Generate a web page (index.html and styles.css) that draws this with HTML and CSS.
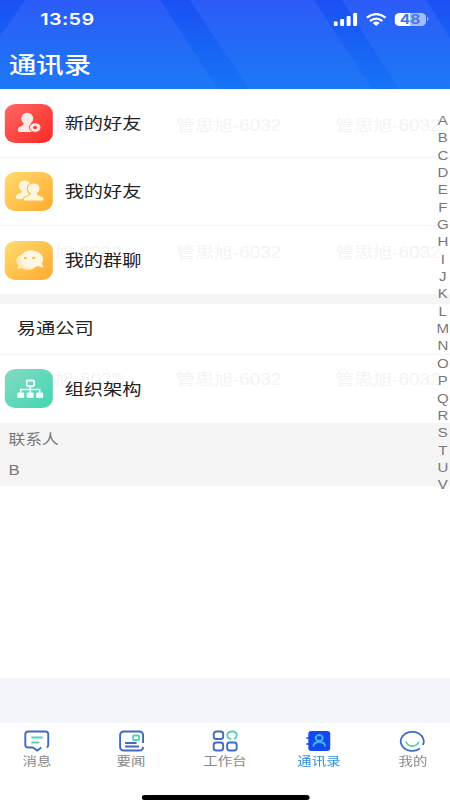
FILE: index.html
```html
<!DOCTYPE html>
<html lang="zh-CN">
<head>
<meta charset="utf-8">
<title>通讯录</title>
<link rel="stylesheet" href="styles.css">
</head>
<body>
<div class="app">
  <header class="header">
    <svg class="stripes" viewBox="0 0 450 89" preserveAspectRatio="none">
      <defs><linearGradient id="band" x1="0" y1="0" x2="0" y2="89" gradientUnits="userSpaceOnUse"><stop offset="0" stop-color="#1b50f4"/><stop offset="1" stop-color="#1674f5"/></linearGradient></defs>
      <path fill="url(#band)" d="M0 0H25L0 37ZM160 0H190L249 89H218ZM314 0H342L399 89H372ZM426 0H450V38Z"/>
    </svg>
    <div class="status">
      <span class="time">13:59</span>
      <div class="signals">
        <svg class="cell" viewBox="0 0 24 13" preserveAspectRatio="none" fill="#fff"><rect x="0" y="8.5" width="4" height="4.5" rx="1"/><rect x="6.5" y="6" width="4" height="7" rx="1"/><rect x="13" y="3" width="4" height="10" rx="1"/><rect x="19.5" y="0" width="4" height="13" rx="1"/></svg>
        <svg class="wifi" viewBox="0 0 20 13" preserveAspectRatio="none" fill="none" stroke="#fff" stroke-width="2.3"><path d="M.8 4.7Q10-2.5 19.2 4.7M4 8Q10 3.3 16 8"/><path fill="#fff" stroke="none" d="M6.6 10Q10 7.2 13.4 10L10 13Z"/></svg>
        <div class="battery"><span>48</span></div>
      </div>
    </div>
    <h1 class="title">通讯录</h1>
  </header>

  <main class="content">
    <div class="watermarks">
      <span>管思旭-6032</span><span>管思旭-6032</span><span>管思旭-6032</span>
      <span>管思旭-6032</span><span>管思旭-6032</span><span>管思旭-6032</span>
      <span>管思旭-6032</span><span>管思旭-6032</span><span>管思旭-6032</span>
    </div>
    <div class="row">
      <div class="tile red"><svg viewBox="0 0 49 39" preserveAspectRatio="none"><g fill="#ffe9e6"><ellipse cx="22.500" cy="14.500" rx="6" ry="5.700"/><path d="M19 17H26V20Q27 22 29 23V28H16Q13 28 13 26Q13 23 17 22Q19 21 19 19Z"/></g><ellipse cx="30.500" cy="23.500" rx="5.800" ry="4.800" fill="#ffe9e6" stroke="#fb423d"/><ellipse cx="30.500" cy="23.500" rx="2" ry="1.700" fill="#fb423d"/></svg></div>
      <span class="label">新的好友</span>
    </div>
    <div class="row">
      <div class="tile yellow"><svg viewBox="0 0 49 39" preserveAspectRatio="none" fill="#fff5dc"><ellipse cx="20" cy="14" rx="6" ry="5.500"/><path d="M17 17H24V27H13Q11 27 11 25Q11 22.500 15 21.500Q17 21 17 19Z"/><path stroke="#ffc142" stroke-width="1.200" d="M29 11C21.500 11 21 19 25.500 21.500Q25 23 22.500 24Q18.500 25 18.500 27.500Q18.500 29 21 29H37Q39.500 29 39.500 27Q39.500 25 36 24Q33 23 32.500 21.500C37 19 36.500 11 29 11Z"/></svg></div>
      <span class="label">我的好友</span>
    </div>
    <div class="row last">
      <div class="tile yellow"><svg viewBox="0 0 49 39" preserveAspectRatio="none"><path fill="#ffeac2" d="M18 13C10 16 10 22 14 24L12.500 28L17 27Q24 31 30 27Z"/><path fill="#fff7e5" d="M26 9.500C13 9.500 13 26.500 26 26.500Q30 27 33 25L39 26.500L37 22.500C41 17 36 9.500 26 9.500Z"/><g fill="#ffbd45"><ellipse cx="20.500" cy="17" rx="1.500" ry="1.300"/><ellipse cx="29" cy="17" rx="1.500" ry="1.300"/></g></svg></div>
      <span class="label">我的群聊</span>
    </div>
    <div class="divider"></div>
    <div class="company"><span class="label">易通公司</span></div>
    <div class="row org">
      <div class="tile green"><svg viewBox="0 0 49 39" preserveAspectRatio="none"><path fill="none" stroke="#effffa" stroke-width="1.600" d="M25.500 16V25M16 24V20.500H35V24"/><rect x="22" y="11.500" width="7.500" height="5.500" rx="1" fill="none" stroke="#effffa" stroke-width="1.800"/><g fill="#effffa"><rect x="12.500" y="23.500" width="7" height="5.500" rx="1.200"/><rect x="22" y="23.500" width="7" height="5.500" rx="1.200"/><rect x="31.500" y="23.500" width="7" height="5.500" rx="1.200"/></g></svg></div>
      <span class="label">组织架构</span>
    </div>
    <div class="section"><span>联系人</span><span>B</span></div>
    <nav class="alphabet">
      <span>A</span><span>B</span><span>C</span><span>D</span><span>E</span><span>F</span><span>G</span><span>H</span><span>I</span><span>J</span><span>K</span><span>L</span><span>M</span><span>N</span><span>O</span><span>P</span><span>Q</span><span>R</span><span>S</span><span>T</span><span>U</span><span>V</span>
    </nav>
  </main>
  <div class="spacer"></div>
  <footer class="tabs">
    <div class="tab">
      <svg viewBox="0 0 28 22" preserveAspectRatio="none" fill="none" stroke="#4169c6" stroke-width="1.900"><path d="M24 17.500Q25.500 17 25.500 15V4Q25.500 1.500 22.500 1.500H5.500Q2.500 1.500 2.500 4V15Q2.500 17.500 5.500 17.500H10L14.500 20.500L18.500 17.500"/><path stroke="#55d3b4" d="M8.500 7.500H20M8.500 12.500H16.500"/></svg>
      <span>消息</span>
    </div>
    <div class="tab">
      <svg viewBox="0 0 28 22" preserveAspectRatio="none" fill="none" stroke="#4169c6" stroke-width="1.900"><path d="M25.500 13V5Q25.500 1.500 21.500 1.500H6.500Q2.500 1.500 2.500 5V17Q2.500 20.500 6.500 20.500H21.500Q25.500 20.500 25.500 17M7.500 13H19M7.500 16.500H21.500"/><rect x="15.500" y="5.500" width="6" height="4.500" rx="1" stroke="#55d3b4"/></svg>
      <span>要闻</span>
    </div>
    <div class="tab">
      <svg viewBox="0 0 28 22" preserveAspectRatio="none" fill="none" stroke="#4169c6" stroke-width="1.900"><rect x="2.500" y="1.500" width="9.500" height="7.500" rx="2.500"/><rect x="2.500" y="12.500" width="9.500" height="8" rx="2.500"/><rect x="16" y="12.500" width="9.500" height="8" rx="2.500"/><path stroke="#55d3b4" d="M20 9.200C14.500 8 15 1.500 21 1.500Q25.500 1.500 25.500 5.500Q25.500 7.500 23 9"/></svg>
      <span>工作台</span>
    </div>
    <div class="tab active">
      <svg viewBox="0 0 28 22" preserveAspectRatio="none"><rect x="3.500" y="1" width="22" height="20" rx="3" fill="#1648f2"/><path d="M1.500 8H5M1.500 14H5" stroke="#1648f2" stroke-width="1.700"/><g fill="none" stroke="#42b6f0" stroke-width="1.900"><ellipse cx="14.500" cy="8" rx="3.500" ry="3"/><path d="M8.500 16.500Q9 12 14.500 12T20.500 16.500"/></g></svg>
      <span>通讯录</span>
    </div>
    <div class="tab">
      <svg viewBox="0 0 28 22" preserveAspectRatio="none" fill="none" stroke="#4169c6" stroke-width="1.800"><path d="M21.500 18.500A11.500 9.500 0 1 1 24.500 15M21.500 18.500L19.500 19.500"/><path stroke="#55d3b4" d="M7.500 11.500Q9 16 14 16T20.500 11.500"/></svg>
      <span>我的</span>
    </div>
    <div class="home"></div>
  </footer>
</div>
</body>
</html>
```
FILE: styles.css
```css
* { box-sizing: border-box; }
body { margin: 0; width: 450px; height: 800px; overflow: hidden; background: #fff; }

/* 375-unit wide layout, widened to fill the viewport */
.app {
  width: 375px; height: 800px;
  display: flex; flex-direction: column;
  transform: scaleX(1.2); transform-origin: 0 0;
  font-family: "Liberation Sans", "Noto Sans CJK SC", sans-serif;
  color: #222; background: #fff;
}

.header { position: relative; height: 89px; flex: none; color: #fff; background: linear-gradient(#2c5bf8, #1c79f5); }
.stripes { position: absolute; inset: 0; width: 100%; height: 100%; }
.status { position: relative; display: flex; justify-content: space-between; align-items: center; height: 38px; padding: 0 20.500px 0 33.500px; }
.time { font: 600 16.500px/20px Inter, sans-serif; letter-spacing: .3px; }
.signals { display: flex; align-items: center; }
.cell { width: 20px; height: 13px; margin-right: 7px; }
.wifi { width: 17px; height: 13px; margin-right: 7px; }
.battery { position: relative; width: 25.500px; height: 13px; border-radius: 4px; background: linear-gradient(90deg, #fff 48%, #a4bffc 48%); color: #4775f0; text-align: center; font: 700 13px/13px Inter, sans-serif; }
.battery::after { content: ""; position: absolute; right: -2.500px; top: 4.500px; width: 1.500px; height: 4px; border-radius: 0 2px 2px 0; background: #a4bffc; }
.title { position: relative; margin: 7px 0 0 7.500px; font-size: 22.800px; line-height: 38px; font-weight: 500; font-family: "Noto Sans CJK SC", sans-serif; }

.content { position: relative; height: 589px; flex: none; }
.watermarks { position: absolute; left: 14px; top: 24.500px; display: grid; grid-template-columns: repeat(3, 132.700px); grid-auto-rows: 127.300px; width: 361px; overflow: hidden; color: #f4f4f4; font: 15.800px/24px "Liberation Sans", "Noto Sans CJK SC", sans-serif; white-space: nowrap; }
.row { display: flex; align-items: center; height: 68.500px; padding: 1px 0 0 3.500px; border-bottom: 1px solid #f4f4f4; }
.row.last { border-bottom: 0; height: 68px; padding-top: 0; }
.tile { position: relative; width: 40.700px; height: 39px; border-radius: 9px; flex: none; }
.tile svg { display: block; width: 100%; height: 100%; }
.red { background: linear-gradient(135deg, #ff6863, #fb2925); }
.yellow { background: linear-gradient(135deg, #ffdc70, #ffaa2d); }
.green { background: linear-gradient(135deg, #85dac4, #42d6b2); }
.label { position: relative; font-size: 16px; line-height: 24px; padding-top: 1px; }
.row .label { margin-left: 9.700px; }
.divider { height: 9.500px; background: #f5f5f5; }
.company { display: flex; align-items: center; height: 51.500px; padding-left: 14px; border-bottom: 1px solid #f4f4f4; }
.row.org { height: 67.500px; border: 0; padding-top: 0; }
.row.org .label { padding-top: 2px; }
.section { height: 63.500px; padding: 1px 0 0 7px; background: #f5f5f5; color: #777; display: flex; flex-direction: column; font-size: 14px; line-height: 31px; }
.alphabet { position: absolute; right: 0; top: 24px; width: 12px; display: flex; flex-direction: column; align-items: center; color: #777; font-size: 12.500px; line-height: 17.340px; }

.spacer { height: 45px; flex: none; background: #f3f5fa; }
.tabs { position: relative; height: 77px; display: flex; flex: none; margin: 0 -8.300px; padding-top: 7px; }
.tab { flex: 1; display: flex; flex-direction: column; align-items: center; color: #888; font-size: 12px; line-height: 18px; }
.tab svg { width: 23.300px; height: 22px; }
.tab span { padding-top: 1px; }
.tab.active { color: #3292d4; }
.home { position: absolute; left: 126.300px; bottom: 0; width: 140px; height: 5.500px; border-radius: 3px; background: #000; }
```
